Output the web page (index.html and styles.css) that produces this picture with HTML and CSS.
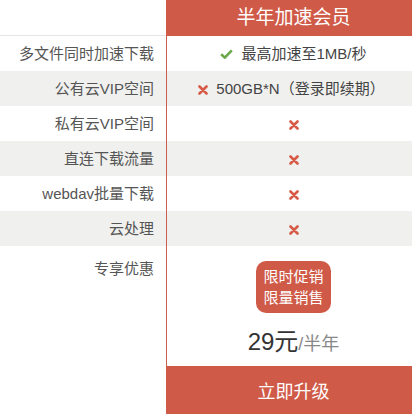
FILE: index.html
```html
<!DOCTYPE html>
<html lang="zh-CN">
<head>
<meta charset="utf-8">
<link rel="stylesheet" href="styles.css">
</head>
<body>
<div class="table">
  <div class="cell label head-l"></div>
  <div class="cell plan head-r">半年加速会员</div>

  <div class="cell label">多文件同时加速下载</div>
  <div class="cell plan"><svg class="ico-check" viewBox="0 0 13 10" width="13" height="10"><path d="M1.2 5.2 L4.8 8.6 L11.8 1.4" fill="none" stroke="#6aa84a" stroke-width="2.6"/></svg><span>最高加速至1MB/秒</span></div>

  <div class="cell label alt">公有云VIP空间</div>
  <div class="cell plan alt shift"><svg class="ico-x" viewBox="0 0 10 10" width="10" height="10"><path d="M1.5 1.5 L8.5 8.5 M8.5 1.5 L1.5 8.5" stroke="#d65a45" stroke-width="2.6" stroke-linecap="round"/></svg><span>500GB*N（登录即续期）</span></div>

  <div class="cell label">私有云VIP空间</div>
  <div class="cell plan"><svg class="ico-x" viewBox="0 0 10 10" width="10" height="10"><path d="M1.5 1.5 L8.5 8.5 M8.5 1.5 L1.5 8.5" stroke="#d65a45" stroke-width="2.6" stroke-linecap="round"/></svg></div>

  <div class="cell label alt">直连下载流量</div>
  <div class="cell plan alt"><svg class="ico-x" viewBox="0 0 10 10" width="10" height="10"><path d="M1.5 1.5 L8.5 8.5 M8.5 1.5 L1.5 8.5" stroke="#d65a45" stroke-width="2.6" stroke-linecap="round"/></svg></div>

  <div class="cell label">webdav批量下载</div>
  <div class="cell plan"><svg class="ico-x" viewBox="0 0 10 10" width="10" height="10"><path d="M1.5 1.5 L8.5 8.5 M8.5 1.5 L1.5 8.5" stroke="#d65a45" stroke-width="2.6" stroke-linecap="round"/></svg></div>

  <div class="cell label alt">云处理</div>
  <div class="cell plan alt"><svg class="ico-x" viewBox="0 0 10 10" width="10" height="10"><path d="M1.5 1.5 L8.5 8.5 M8.5 1.5 L1.5 8.5" stroke="#d65a45" stroke-width="2.6" stroke-linecap="round"/></svg></div>

  <div class="cell label promo-l">专享优惠</div>
  <div class="cell plan promo-r">
    <div class="badge">限时促销<br>限量销售</div>
    <div class="price"><span class="amount">29元</span><span class="period">/半年</span></div>
  </div>

  <div class="cell label foot-l"></div>
  <div class="cell plan foot-r">立即升级</div>
</div>
</body>
</html>
```

FILE: styles.css
```css
* { box-sizing: border-box; }
html, body {
  margin: 0;
  padding: 0;
  background: #fff;
}
body {
  font-family: "Liberation Sans", "Noto Sans CJK SC", sans-serif;
  color: #555;
}
.table {
  display: grid;
  grid-template-columns: 166px 1fr;
  grid-template-rows: 36px repeat(6, 35px) 120px 50px;
  width: 412px;
}
.cell {
  display: flex;
  align-items: center;
  font-size: 15px;
  line-height: 20px;
}
.label {
  justify-content: flex-end;
  padding-right: 12px;
  color: #555;
}
.plan {
  justify-content: center;
  border-left: 1px solid #c9604e;
  padding-left: 8px;
  color: #444;
  gap: 8px;
}
.plan.shift { padding-left: 4px; }
.alt { background: #f0f0ee; }
.head-l { border-bottom: 1px solid #e6e6e6; }
.head-r {
  background: #d05a48;
  color: #fff;
  font-size: 19px;
  border-left-color: #d05a48;
}
.ico-check { margin-top: 1px; }
.ico-x { margin-top: 2px; }
.promo-l {
  align-items: flex-start;
  padding-top: 13px;
}
.promo-r {
  flex-direction: column;
  justify-content: flex-start;
  padding-top: 15px;
  gap: 0;
}
.badge {
  background: #d05a48;
  color: #fff;
  font-size: 15px;
  line-height: 21px;
  padding: 5px 7px;
  border-radius: 10px;
  text-align: center;
}
.price {
  margin-top: 14px;
  line-height: 30px;
}
.amount {
  font-size: 24px;
  color: #333;
}
.period {
  font-size: 18px;
  color: #888;
}
.foot-r {
  background: #d05a48;
  color: #fff;
  font-size: 18px;
  border-left-color: #d05a48;
  margin-bottom: 2px;
  padding-top: 3px;
}
```
